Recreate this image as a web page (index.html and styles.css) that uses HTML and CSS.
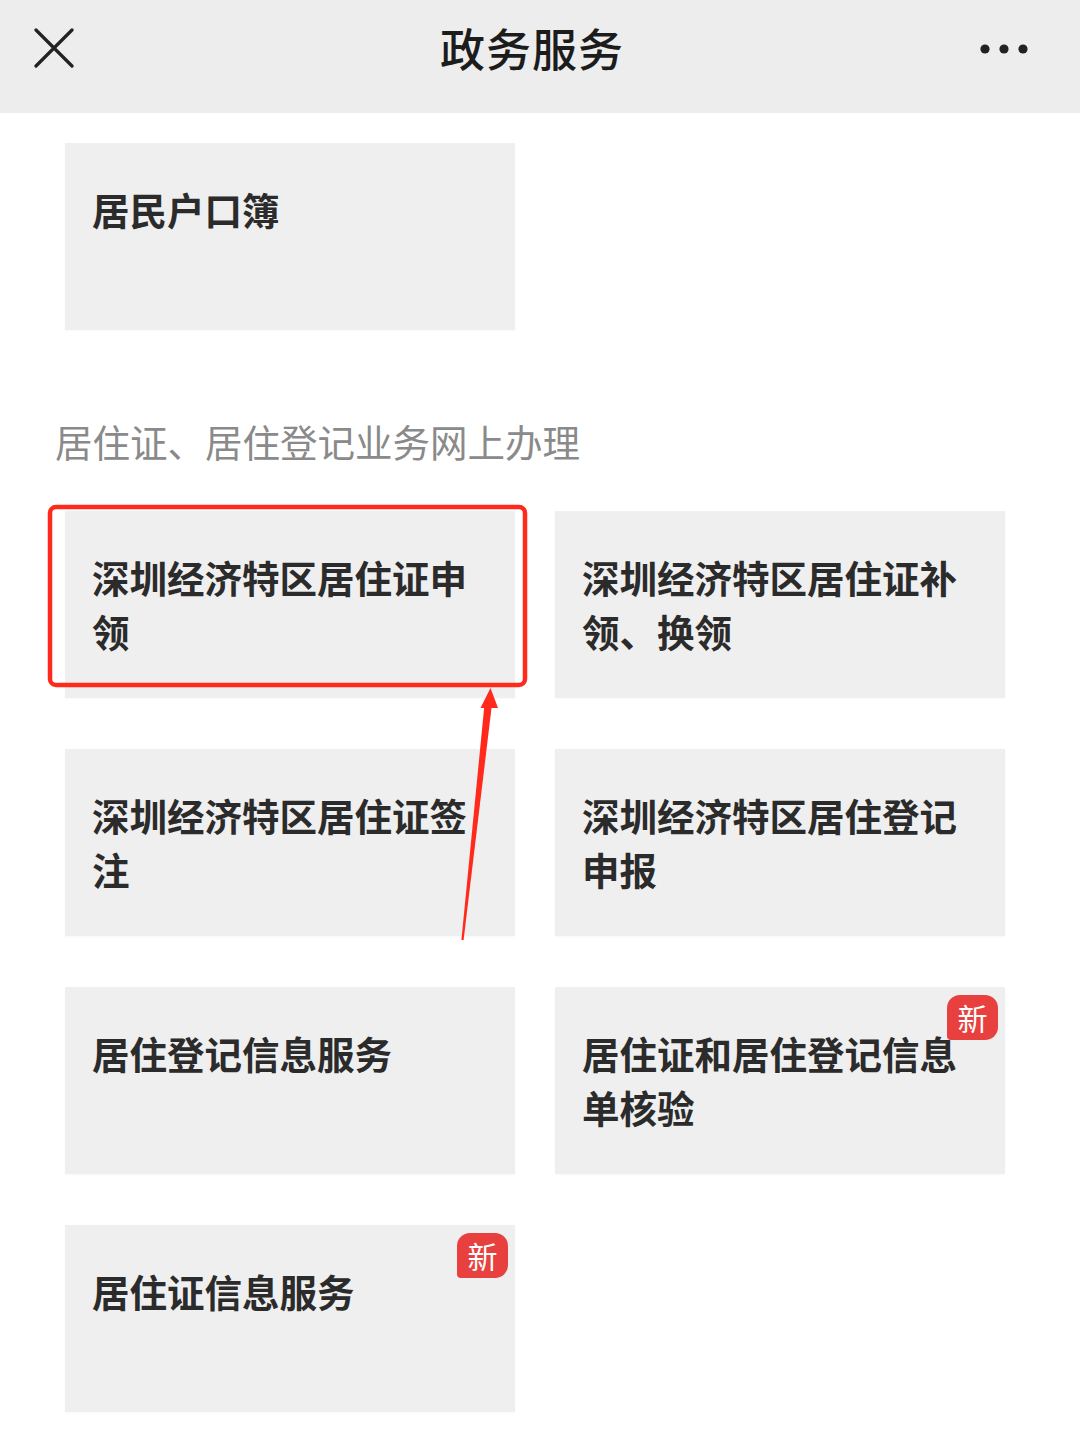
FILE: index.html
```html
<!DOCTYPE html>
<html lang="zh-CN">
<head>
<meta charset="utf-8">
<title>政务服务</title>
<link rel="stylesheet" href="styles.css">
</head>
<body>
<div class="page">
  <header class="topbar">
    <svg class="icon-close" width="40" height="40" viewBox="0 0 40 40">
      <path d="M2 2 L38 38 M38 2 L2 38" stroke="#222" stroke-width="3.2" stroke-linecap="round" fill="none"/>
    </svg>
    <h1 class="title">政务服务</h1>
    <svg class="icon-more" width="50" height="12" viewBox="0 0 50 12">
      <circle cx="5" cy="6" r="4.6" fill="#222"/>
      <circle cx="24" cy="6" r="4.6" fill="#222"/>
      <circle cx="43" cy="6" r="4.6" fill="#222"/>
    </svg>
  </header>

  <main class="content">
    <div class="grid first">
      <div class="card"><span class="card-text">居民户口簿</span></div>
    </div>

    <h2 class="section-title">居住证、居住登记业务网上办理</h2>

    <div class="grid">
      <div class="card"><span class="card-text">深圳经济特区居住证申领</span></div>
      <div class="card"><span class="card-text">深圳经济特区居住证补领、换领</span></div>
      <div class="card"><span class="card-text">深圳经济特区居住证签注</span></div>
      <div class="card"><span class="card-text">深圳经济特区居住登记申报</span></div>
      <div class="card"><span class="card-text">居住登记信息服务</span></div>
      <div class="card"><span class="card-text">居住证和居住登记信息单核验</span><span class="badge">新</span></div>
      <div class="card"><span class="card-text">居住证信息服务</span><span class="badge">新</span></div>
    </div>
  </main>

  <svg class="annotation" width="1080" height="1452" viewBox="0 0 1080 1452">
    <rect x="50" y="507" width="475" height="178" rx="6" ry="6" fill="none" stroke="#ff2a1c" stroke-width="4.5"/>
    <polygon points="484.5,704 492,704 463.6,940 461.4,940" fill="#ff2a1c"/>
    <polygon points="490.5,688 480.5,708 498,708" fill="#ff2a1c"/>
  </svg>
</div>
</body>
</html>
```

FILE: styles.css
```css
* {
  box-sizing: border-box;
}

html, body {
  margin: 0;
  padding: 0;
  background: #ffffff;
}

body {
  font-family: "Noto Sans CJK SC", "Noto Sans", sans-serif;
  color: #2a2a2a;
}

.page {
  position: relative;
  width: 1080px;
  height: 1452px;
  overflow: hidden;
}

.topbar {
  height: 113px;
  background: #ededed;
  display: flex;
  align-items: center;
  justify-content: space-between;
  padding: 0 50px 18px 34px;
}

.icon-close {
  display: block;
  width: 40px;
  height: 40px;
}

.icon-more {
  display: block;
  margin-top: 2px;
}

.title {
  margin: 0 0 0 10px;
  font-size: 45px;
  font-weight: 500;
  color: #1c1c1c;
  line-height: 1;
  letter-spacing: 1px;
}

.content {
  padding: 30px 0 0 55px;
}

.grid {
  margin-left: 10px;
  display: grid;
  grid-template-columns: 450px 450px;
  column-gap: 40px;
  row-gap: 51px;
}

.card {
  position: relative;
  height: 187px;
  background: #efefef;
  padding: 39px 28px 0 27px;
  box-shadow: 0 1px 2px rgba(0, 0, 0, 0.03);
}

.card-text {
  display: block;
  font-size: 37.5px;
  line-height: 54px;
  font-weight: 700;
  color: #2b2b2b;
}

.section-title {
  margin: 84px 0 43px 0;
  font-size: 37.5px;
  line-height: 54px;
  font-weight: 400;
  color: #8a8a8a;
}

.badge {
  position: absolute;
  top: 8px;
  right: 7px;
  width: 51px;
  height: 45px;
  background: #e8403e;
  color: #ffffff;
  border-radius: 13px 13px 13px 4px;
  font-size: 30px;
  line-height: 45px;
  text-align: center;
  font-weight: 400;
}

.annotation {
  position: absolute;
  top: 0;
  left: 0;
  pointer-events: none;
}
```
